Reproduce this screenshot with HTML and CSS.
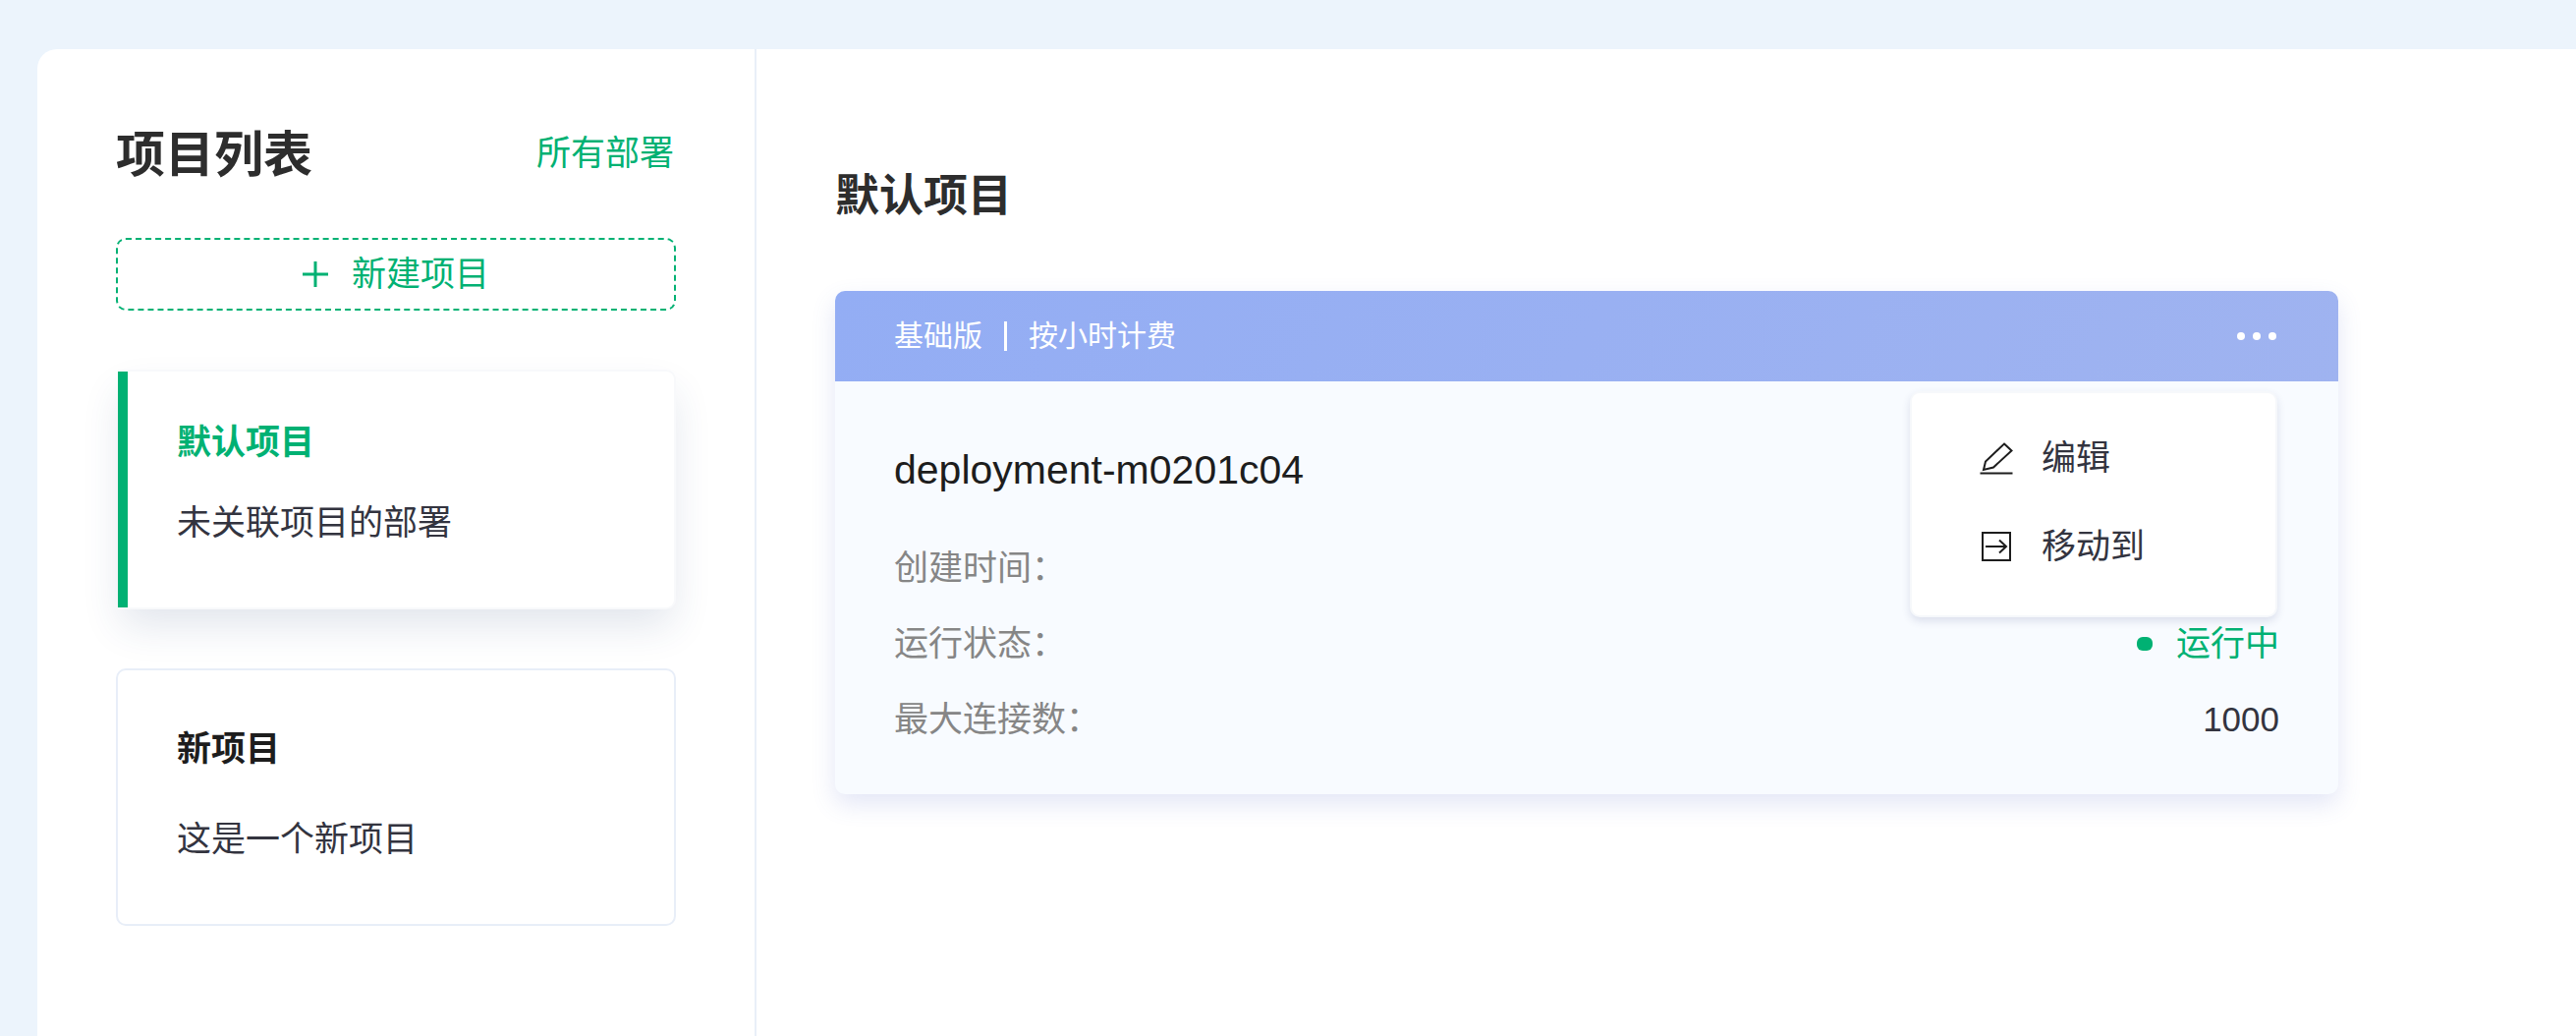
FILE: index.html
```html
<!DOCTYPE html>
<html lang="zh-CN">
<head>
<meta charset="utf-8">
<meta name="viewport" content="width=device-width, initial-scale=1">
<title>项目列表</title>
<link rel="stylesheet" href="styles.css">
</head>
<body>
<div class="shell">
  <aside class="sidebar">
    <header class="sidebar-head">
      <h1 class="sidebar-title">项目列表</h1>
      <a class="all-link" href="#">所有部署</a>
    </header>
    <button class="new-project" type="button">
      <svg class="plus" viewBox="0 0 26 26" aria-hidden="true"><path d="M13 0v26M0 13h26"/></svg>
      <span>新建项目</span>
    </button>
    <section class="project project-active">
      <h2 class="project-name">默认项目</h2>
      <p class="project-desc">未关联项目的部署</p>
    </section>
    <section class="project">
      <h2 class="project-name">新项目</h2>
      <p class="project-desc">这是一个新项目</p>
    </section>
  </aside>
  <main class="content">
    <h2 class="content-title">默认项目</h2>
    <article class="deployment">
      <header class="deployment-head">
        <span>基础版</span>
        <span class="separator"></span>
        <span>按小时计费</span>
        <div class="more-wrap">
          <button class="more" type="button" aria-label="更多"><i class="more-dot"></i><i class="more-dot"></i><i class="more-dot"></i></button>
          <div class="menu">
            <button class="menu-item" type="button">
              <svg class="menu-icon" viewBox="0 0 36 36" aria-hidden="true"><path d="M26 3.500L33.500 10.500L15 27.500L5 30L7 21.500ZM1.500 33.500H34.500"/></svg>
              <span>编辑</span>
            </button>
            <button class="menu-item" type="button">
              <svg class="menu-icon" viewBox="0 0 36 36" aria-hidden="true"><path d="M4 4H32V32H4ZM7 18H28.500M21 11.500L28 18L21 24.500"/></svg>
              <span>移动到</span>
            </button>
          </div>
        </div>
      </header>
      <div class="deployment-body">
        <h3 class="deployment-name">deployment-m0201c04</h3>
        <dl class="facts">
          <div class="fact"><dt>创建时间：</dt><dd></dd></div>
          <div class="fact"><dt>运行状态：</dt><dd class="running"><i class="status-dot"></i>运行中</dd></div>
          <div class="fact"><dt>最大连接数：</dt><dd>1000</dd></div>
        </dl>
      </div>
    </article>
  </main>
</div>
</body>
</html>
```
FILE: styles.css
```css
* {
  box-sizing: border-box;
}

body {
  margin: 0;
  min-height: 100vh;
  display: flex;
  padding: 50px 0 0 38px;
  background: #ecf4fc;
  color: #33343f;
  font-family: "Liberation Sans", "Noto Sans CJK SC", sans-serif;
  font-size: 35px;
  line-height: 52px;
}

h1, h2, h3, p, dl, dd {
  margin: 0;
}

button {
  font: inherit;
  color: inherit;
  background: none;
  border: 0;
  padding: 0;
  cursor: pointer;
}

.shell {
  flex: 1;
  display: flex;
  background: #fff;
  border-top-left-radius: 20px;
}

.sidebar {
  flex: 0 0 732px;
  padding: 70px 80px 0;
  border-right: 2px solid #e9eff8;
}

.sidebar-head {
  display: flex;
  justify-content: space-between;
  align-items: flex-end;
  height: 74px;
  padding-right: 2px;
}

.sidebar-title {
  color: #2d2d2d;
  font-size: 50px;
  line-height: 72px;
}

.all-link {
  padding-bottom: 12px;
  color: #00b173;
  text-decoration: none;
}

.new-project {
  display: flex;
  justify-content: center;
  align-items: center;
  gap: 24px;
  width: 100%;
  height: 74px;
  margin: 48px 0 60px;
  border: 2px dashed #00b173;
  border-radius: 10px;
  color: #00b173;
}

.plus {
  width: 26px;
  height: 26px;
  fill: none;
  stroke: currentColor;
  stroke-width: 3;
}

.project {
  position: relative;
  margin-bottom: 60px;
  padding: 54px 60px 60px;
  border: 2px solid #e8eef8;
  border-radius: 10px;
}

.project-name {
  color: #1d1d1d;
  font-size: 35px;
  line-height: 52px;
}

.project-desc {
  margin-top: 40px;
}

.project-active {
  padding: 46px 60px 60px;
  border-color: #f8f9fb;
  border-left: 0;
  border-radius: 0 10px 10px 0;
  margin-left: 2px;
  background: #fff;
  box-shadow: 0 20px 40px -4px rgba(40, 70, 120, 0.14);
}

.project-active::before {
  content: "";
  position: absolute;
  inset: 0 auto 0 0;
  width: 10px;
  background: #00b173;
}

.project-active .project-name {
  color: #00b173;
}

.project-active .project-desc {
  margin-top: 30px;
}

.content {
  flex: 1;
  padding: 118px 242px 60px 80px;
}

.content-title {
  color: #2d2d2d;
  font-size: 45px;
  line-height: 64px;
}

.deployment {
  margin-top: 64px;
  border-radius: 10px;
  background: #f8fbff;
  box-shadow: 0 10px 24px rgba(80, 100, 200, 0.16);
}

.deployment-head {
  display: flex;
  align-items: center;
  height: 92px;
  padding: 0 60px;
  border-radius: 10px 10px 0 0;
  background: linear-gradient(120deg, #93adf4, #9fb3f0);
  color: #fff;
  font-size: 30px;
}

.separator {
  width: 3px;
  height: 30px;
  margin: 0 22px;
  background: #fff;
}

.more-wrap {
  position: relative;
  margin-left: auto;
}

.more {
  display: flex;
  align-items: center;
  gap: 8px;
  height: 52px;
  padding: 0 3px;
}

.more-dot {
  width: 8px;
  height: 8px;
  border-radius: 50%;
  background: #fff;
}

.menu {
  position: absolute;
  top: 82px;
  right: 2px;
  width: 374px;
  padding: 40px 66px 44px 68px;
  display: grid;
  gap: 38px;
  border: 2px solid #f6f8fb;
  border-radius: 10px;
  background: #fff;
  box-shadow: 0 4px 8px rgba(50, 60, 120, 0.14);
  color: #33343f;
  font-size: 35px;
}

.menu-item {
  display: flex;
  align-items: center;
  gap: 28px;
  text-align: left;
}

.menu-icon {
  width: 36px;
  height: 36px;
  fill: none;
  stroke: #1d1d1d;
  stroke-width: 2;
}

.deployment-body {
  padding: 60px 60px 50px;
}

.deployment-name {
  color: #1d1d1d;
  font-size: 41px;
  font-weight: 400;
  line-height: 60px;
}

.facts {
  display: grid;
  gap: 25px;
  margin-top: 44px;
}

.fact {
  display: flex;
  justify-content: space-between;
}

.fact dt {
  color: #868686;
}

.running {
  display: flex;
  align-items: center;
  gap: 24px;
  color: #00b173;
}

.status-dot {
  width: 16px;
  height: 14px;
  border-radius: 6px;
  background: #00b173;
}
```
